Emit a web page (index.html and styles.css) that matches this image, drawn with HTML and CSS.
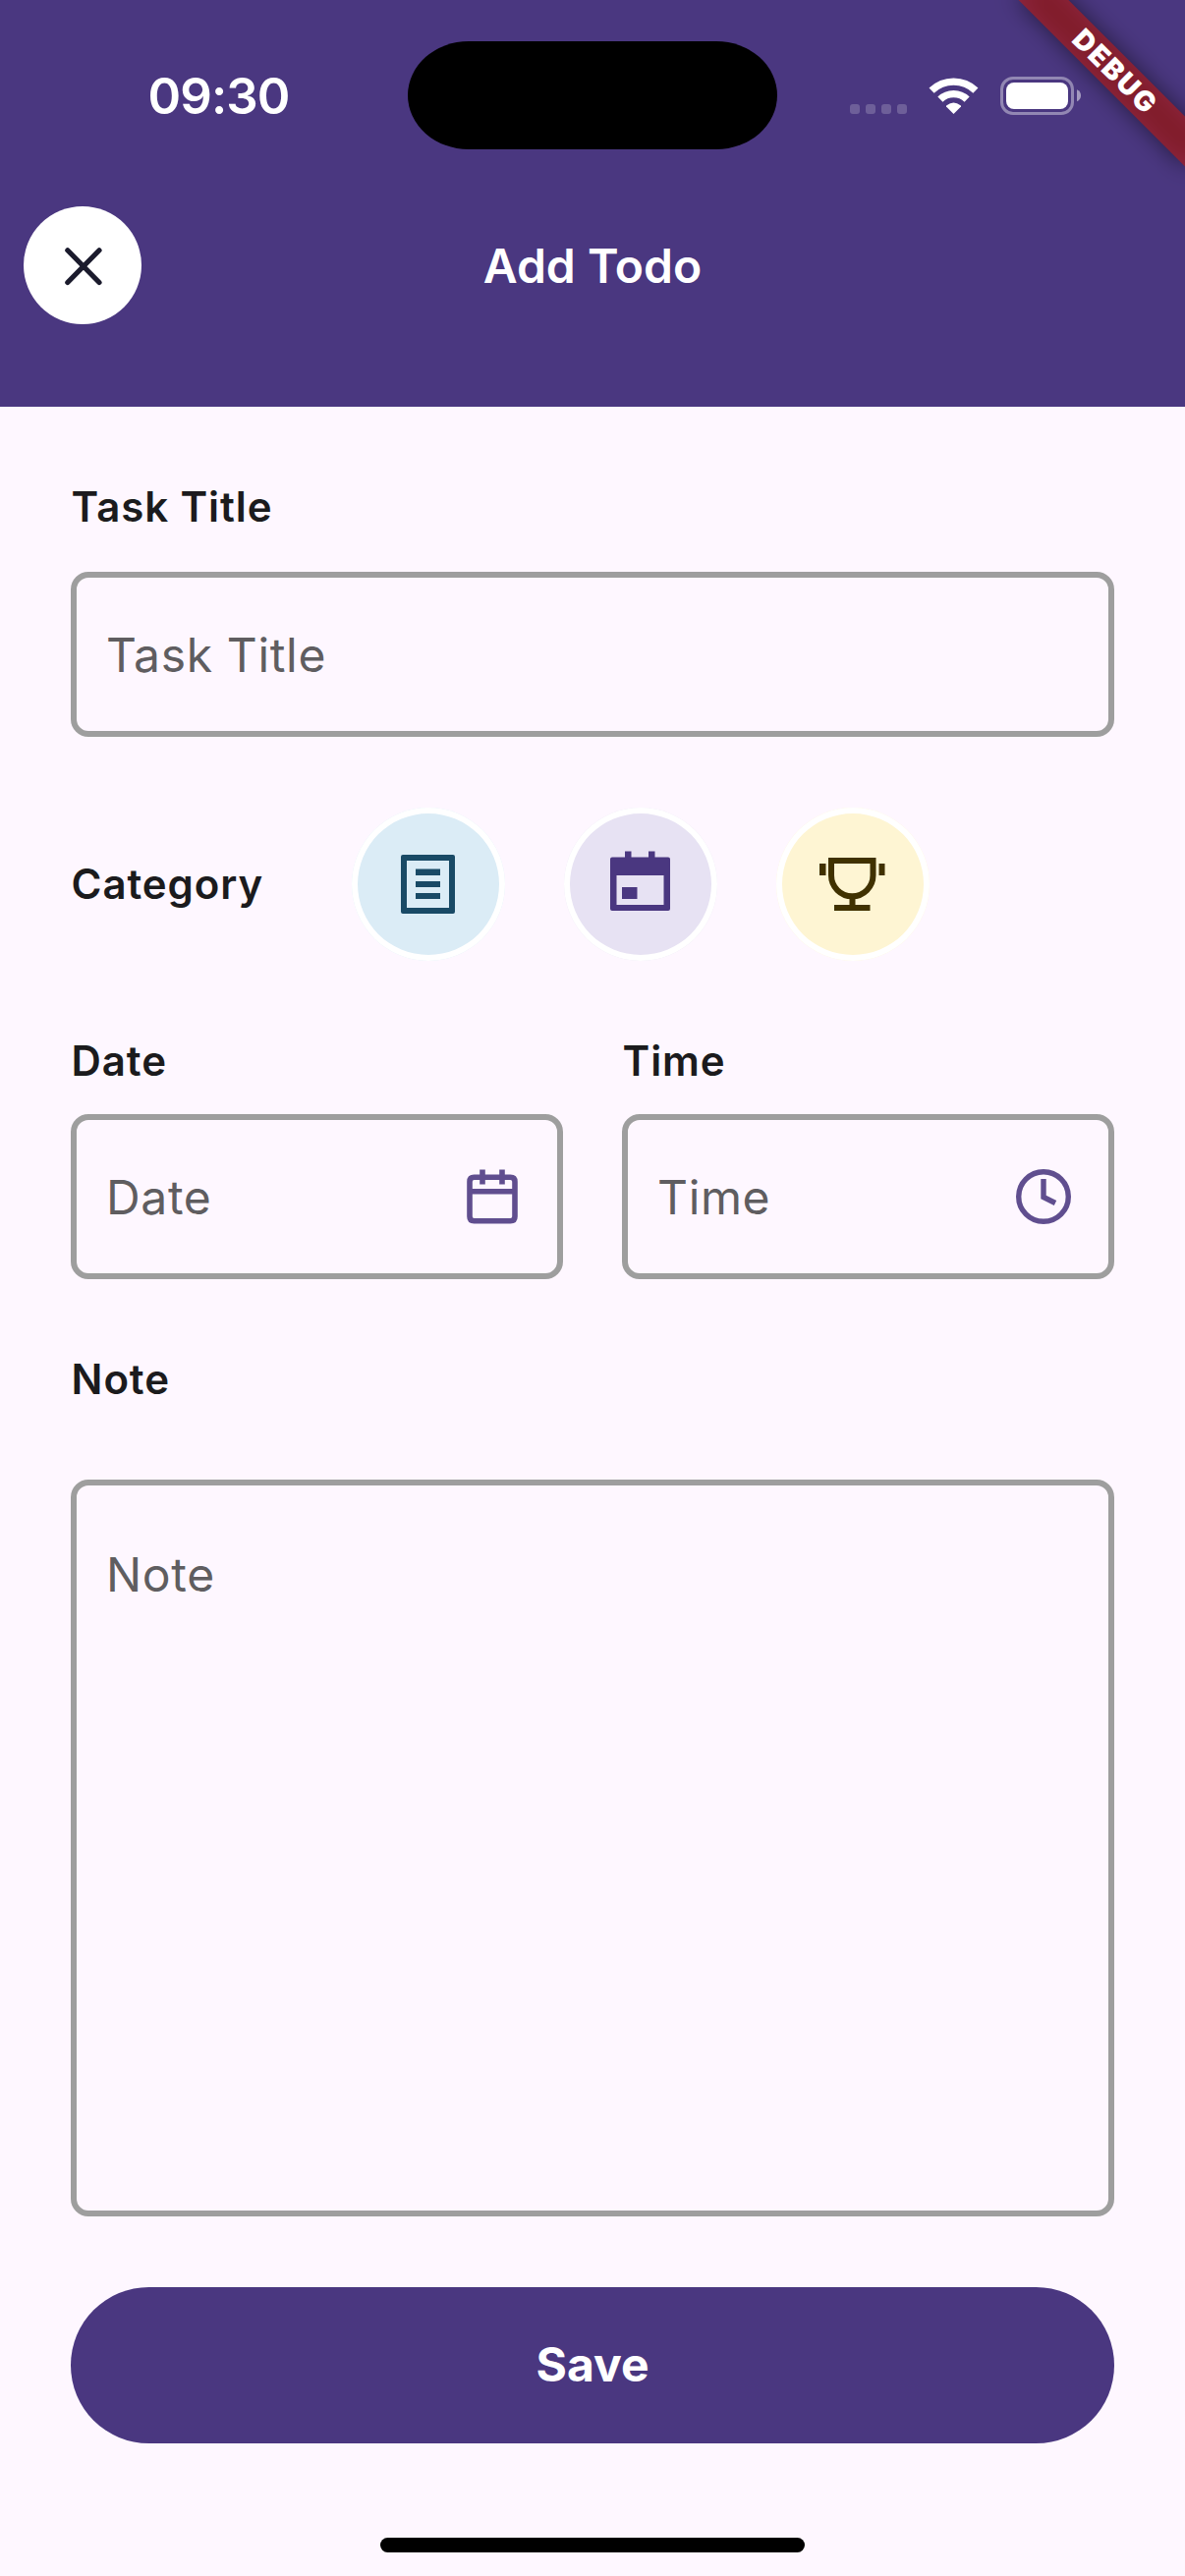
FILE: index.html
```html
<!DOCTYPE html>
<html lang="en">
<head>
<meta charset="utf-8">
<title>Add Todo</title>
<link rel="stylesheet" href="styles.css">
</head>
<body>
<div class="screen">
  <header class="header">
    <div class="status-bar">
      <div class="clock">09:30</div>
      <div class="island"></div>
      <div class="status-icons">
        <svg width="236" height="40" viewBox="864 77 236 40">
          <g fill="#fff" fill-opacity=".2">
            <rect x="865" y="106" width="10" height="10" rx="3"/>
            <rect x="881" y="106" width="10" height="10" rx="3"/>
            <rect x="897" y="106" width="10" height="10" rx="3"/>
            <rect x="913" y="106" width="10" height="10" rx="3"/>
          </g>
          <g fill="none" stroke="#fff" stroke-width="7.4">
            <path d="M948.1 92.2A32.3 32.3 0 0 1 992.9 92.2"/>
            <path d="M956.9 101.1A19.6 19.6 0 0 1 984.1 101.1"/>
          </g>
          <path d="M970.5 116L963 108.5Q962.700 107.800 963.500 107.200Q970.500 102 977.500 107.200Q978.300 107.800 978 108.500Z" fill="#fff"/>
          <rect x="1019.500" y="79.500" width="72" height="36" rx="11.500" fill="none" stroke="#fff" stroke-opacity=".4" stroke-width="3"/>
          <rect x="1024" y="84" width="63" height="27" rx="8" fill="#fff"/>
          <path d="M1096 91.300Q1100 93 1100 97.300Q1100 101.500 1096 103.200Z" fill="#fff" fill-opacity=".5"/>
        </svg>
      </div>
    </div>
    <div class="app-bar">
      <div class="close">
        <svg width="120" height="120" viewBox="0 0 120 120" fill="none" stroke="#1b1b2d" stroke-width="5.200" stroke-linecap="round">
          <path d="M44.800 44.800L77 77.500M77 44.800L44.800 77.500"/>
        </svg>
      </div>
      <h1 class="title">Add Todo</h1>
    </div>
    <div class="debug"><span>DEBUG</span></div>
  </header>

  <main class="form">
    <div class="label">Task Title</div>
    <div class="field field-title">Task Title</div>

    <div class="category-row">
      <div class="label">Category</div>
      <div class="categories">
        <div class="category category-task">
          <svg width="156" height="156" viewBox="0 0 156 156" fill="#194a66">
            <path fill-rule="evenodd" d="M52 48H103Q105 48 105 50V106Q105 108 103 108H52Q50 108 50 106V50Q50 48 52 48ZM56 54V102H99V54Z"/>
            <path d="M65 62.500H90V69H65ZM65 75H90V81H65ZM65 87H90V93H65Z"/>
          </svg>
        </div>
        <div class="category category-event">
          <svg width="156" height="156" viewBox="0 0 156 156" fill="#4a3780">
            <path fill-rule="evenodd" d="M62 44.500H68.500V50.500H86V44.500H92.500V50.500H106Q108 50.500 108 52.500V103Q108 105 106 105H49Q47 105 47 103V52.500Q47 50.500 49 50.500H62ZM53.500 69V99H101.500V69Z"/>
            <path d="M59 81H74.500V93H59Z"/>
          </svg>
        </div>
        <div class="category category-goal">
          <svg width="156" height="156" viewBox="0 0 156 156">
            <path fill="none" stroke="#403100" stroke-width="6" d="M56 54H98.500V69A21.250 21.250 0 0 1 56 69Z"/>
            <path fill="#403100" d="M44 57H50.500V69H44ZM104.500 57H110.500V69H104.500ZM74.500 91H80.500V99H95.500V105H59V99H74.500Z"/>
          </svg>
        </div>
      </div>
    </div>

    <div class="when-row">
      <div class="when">
        <div class="label">Date</div>
        <div class="field">Date
          <svg width="60" height="60" viewBox="471 1188 60 60" fill="none" stroke="#4a3780" stroke-opacity=".88" stroke-width="5.600">
            <path d="M482.500 1198.300H519.500Q524 1198.300 524 1202.800V1238.200Q524 1242.700 519.500 1242.700H482.500Q478 1242.700 478 1238.200V1202.800Q478 1198.300 482.500 1198.300ZM478 1212.700H524M491 1190.500V1205.500M511 1190.500V1205.500"/>
          </svg>
        </div>
      </div>
      <div class="when">
        <div class="label">Time</div>
        <div class="field">Time
          <svg width="60" height="60" viewBox="1032 1188 60 60" fill="none" stroke="#4a3780" stroke-opacity=".88" stroke-width="5.400">
            <circle cx="1062" cy="1218" r="25.300"/>
            <path d="M1062 1200V1218.500L1074 1224.500"/>
          </svg>
        </div>
      </div>
    </div>

    <div class="label note-label">Note</div>
    <div class="field field-note">Note</div>

    <div class="save">Save</div>
  </main>
  <div class="home-indicator"></div>
</div>
</body>
</html>
```
FILE: styles.css
```css
* {
  box-sizing: border-box;
}

body {
  margin: 0;
  background: #fef7ff;
  font-family: Inter, "Liberation Sans", sans-serif;
}

svg {
  display: block;
  flex: none;
}

.screen {
  width: 1206px;
  height: 2622px;
  overflow: hidden;
}

/* Header */
.header {
  position: relative;
  height: 414px;
  overflow: hidden;
  background: #4a3780;
  color: #fff;
}

.status-bar {
  display: grid;
  grid-template-columns: 415px 376px 415px;
  align-items: center;
  height: 194px;
}

.clock {
  padding: 2px 0 0 30px;
  font-size: 51px;
  line-height: 60px;
  font-weight: 600;
  letter-spacing: -0.9px;
  text-align: center;
}

.island {
  height: 110px;
  border-radius: 62px / 55px;
  background: #000;
}

.status-icons {
  padding-left: 73px;
}

.app-bar {
  display: grid;
  grid-template-columns: 120px 1fr 120px;
  align-items: center;
  padding: 16px 24px 0;
}

.close {
  height: 120px;
  border-radius: 50%;
  background: #fff;
}

.title {
  margin: 0;
  padding-top: 2px;
  font-size: 48px;
  line-height: 58px;
  font-weight: 600;
  text-align: center;
}

/* Corner ribbon */
.debug {
  position: absolute;
  top: 54px;
  left: 1014px;
  width: 240px;
  height: 36px;
  padding-left: 3px;
  transform: rotate(45deg);
  text-align: center;
  font-size: 28.5px;
  line-height: 36px;
  font-weight: 900;
  letter-spacing: 1.9px;
}

.debug::before,
.debug::after {
  content: "";
  position: absolute;
  inset: 0;
}

.debug::before {
  background: rgba(0, 0, 0, 0.5);
  filter: blur(11.9px);
}

.debug::after {
  background: rgba(183, 28, 28, 0.627);
}

.debug span {
  position: relative;
  z-index: 1;
}

/* Form */
.form {
  display: flex;
  flex-direction: column;
  padding: 77px 72px 0;
}

.label {
  padding-left: 0.6px;
  color: #1b1b1d;
  font-size: 42px;
  line-height: 50px;
  font-weight: 600;
  letter-spacing: 0.9px;
}

.field {
  display: flex;
  align-items: center;
  justify-content: space-between;
  height: 168px;
  padding: 1px 36px 0 30px;
  border: 6px solid #9e9e9e;
  border-radius: 18px;
  color: #5f5d60;
  font-size: 48px;
  line-height: 58px;
  font-weight: 400;
  letter-spacing: 0.65px;
}

.field svg {
  margin-bottom: 2px;
}

.field-title {
  margin-top: 41px;
}

.category-row {
  display: grid;
  grid-template-columns: 286px 1fr;
  align-items: center;
  margin-top: 72px;
}

.categories {
  display: flex;
  gap: 60px;
}

.category {
  width: 156px;
  height: 156px;
  border-radius: 50%;
  box-shadow: inset 0 0 0 6px #fff;
}

.category-task {
  background: #dbecf6;
}

.category-event {
  background: #e7e2f3;
}

.category-goal {
  background: #fef5d3;
}

.when-row {
  display: grid;
  grid-template-columns: 1fr 1fr;
  gap: 60px;
  margin-top: 77px;
}

.when {
  display: grid;
  gap: 29px;
}

.note-label {
  margin-top: 77px;
}

.field-note {
  align-items: flex-start;
  height: 750px;
  margin-top: 77px;
  padding-top: 62px;
}

.save {
  height: 159px;
  margin-top: 72px;
  border-radius: 80px;
  background: #4a3780;
  color: #fff;
  font-size: 48px;
  line-height: 158px;
  font-weight: 700;
  text-align: center;
}

.home-indicator {
  width: 432px;
  height: 15px;
  margin: 96px auto 0;
  border-radius: 8px;
  background: #000;
}
```
